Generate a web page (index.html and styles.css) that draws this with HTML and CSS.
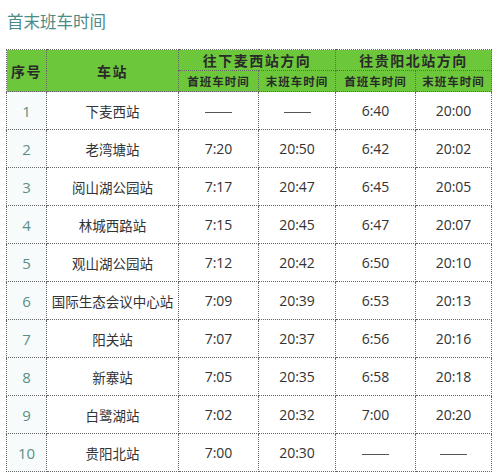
FILE: index.html
```html
<!DOCTYPE html>
<html lang="zh">
<head>
<meta charset="utf-8">
<link rel="stylesheet" href="styles.css">
</head>
<body>
<div class="page">
  <h1 class="title">首末班车时间</h1>
  <table class="tt">
    <colgroup>
      <col class="c-no"><col class="c-st"><col class="c-t1"><col class="c-t2"><col class="c-t3"><col class="c-t4">
    </colgroup>
    <thead>
      <tr class="h1">
        <th rowspan="2">序号</th>
        <th rowspan="2">车站</th>
        <th colspan="2">往下麦西站方向</th>
        <th colspan="2">往贵阳北站方向</th>
      </tr>
      <tr class="h2">
        <th>首班车时间</th><th>末班车时间</th><th>首班车时间</th><th>末班车时间</th>
      </tr>
    </thead>
    <tbody>
      <tr><td class="no">1</td><td>下麦西站</td><td><span class="dash"></span></td><td><span class="dash"></span></td><td>6:40</td><td>20:00</td></tr>
      <tr><td class="no">2</td><td>老湾塘站</td><td>7:20</td><td>20:50</td><td>6:42</td><td>20:02</td></tr>
      <tr><td class="no">3</td><td>阅山湖公园站</td><td>7:17</td><td>20:47</td><td>6:45</td><td>20:05</td></tr>
      <tr><td class="no">4</td><td>林城西路站</td><td>7:15</td><td>20:45</td><td>6:47</td><td>20:07</td></tr>
      <tr><td class="no">5</td><td>观山湖公园站</td><td>7:12</td><td>20:42</td><td>6:50</td><td>20:10</td></tr>
      <tr><td class="no">6</td><td>国际生态会议中心站</td><td>7:09</td><td>20:39</td><td>6:53</td><td>20:13</td></tr>
      <tr><td class="no">7</td><td>阳关站</td><td>7:07</td><td>20:37</td><td>6:56</td><td>20:16</td></tr>
      <tr><td class="no">8</td><td>新寨站</td><td>7:05</td><td>20:35</td><td>6:58</td><td>20:18</td></tr>
      <tr><td class="no">9</td><td>白鹭湖站</td><td>7:02</td><td>20:32</td><td>7:00</td><td>20:20</td></tr>
      <tr><td class="no">10</td><td>贵阳北站</td><td>7:00</td><td>20:30</td><td><span class="dash"></span></td><td><span class="dash"></span></td></tr>
    </tbody>
  </table>
</div>
</body>
</html>
```
FILE: styles.css
```css
html, body {
  margin: 0;
  padding: 0;
  background: #fff;
}
.page {
  padding: 9px 0 0 6px;
  font-family: "Noto Sans CJK SC", "Noto Sans", sans-serif;
}
.title {
  margin: 0 0 16px 1px;
  font-size: 16.5px;
  font-weight: 400;
  line-height: 24px;
  color: #4d8c86;
}
.tt {
  border-collapse: collapse;
  table-layout: fixed;
  width: 485px;
}
.c-no { width: 40px; }
.c-st { width: 132px; }
.c-t1 { width: 80px; }
.c-t2 { width: 77px; }
.c-t3 { width: 80px; }
.c-t4 { width: 76px; }
.tt th, .tt td {
  border: 1px dotted #666;
  padding: 0;
  text-align: center;
}
.tt th {
  background: #6cc83a;
  color: #2a2a2a;
  font-weight: 700;
}
.h1 th {
  height: 20px;
  font-size: 14px;
  letter-spacing: 1.5px;
}
.h2 th {
  height: 20px;
  font-size: 11.5px;
  letter-spacing: 1px;
}
.tt td {
  height: 37px;
  font-size: 13.5px;
  color: #333;
}
.tt td:nth-child(n+3) {
  font-family: "Open Sans", "Noto Sans", sans-serif;
  font-size: 14px;
}
.tt td.no {
  color: #5a9088;
  background: #f7fbfb;
  font-family: "Open Sans", "Noto Sans", sans-serif;
  font-size: 15px;
}
.dash {
  display: inline-block;
  width: 27px;
  height: 1.5px;
  background: #555;
  vertical-align: middle;
}
```
